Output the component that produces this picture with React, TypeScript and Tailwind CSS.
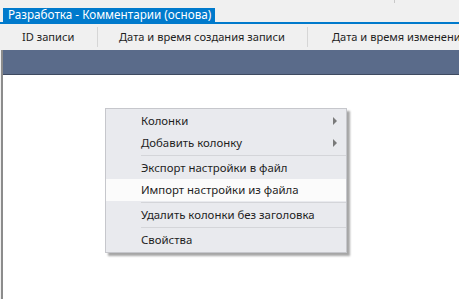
export default function App() {
  return (
    <div className="relative flex h-[299px] w-[459px] flex-col overflow-hidden bg-[#f0f0f0] font-['Noto_Sans',sans-serif] text-[11.4px] text-[#1e1e1e]">
      {/* top strip */}
      <div className="relative h-[8px] shrink-0">
        <div className="absolute left-[394px] top-0 h-[3px] w-px bg-[#c8c8c8]" />
      </div>

      {/* document tab */}
      <div className="flex h-[16px] shrink-0 border-b-2 border-[#007acc]">
        <div className="ml-[3px] flex shrink-0 items-center whitespace-nowrap bg-[#007acc] pl-[5px] pr-[4px] text-[11.7px] leading-none text-white">
          Разработка - Комментарии (основа)
        </div>
      </div>

      {/* column headers */}
      <div className="flex h-[26px] shrink-0 items-center overflow-hidden whitespace-nowrap text-[11.1px]">
        <div className="flex w-[97px] shrink-0 items-center pl-[22px]">ID записи</div>
        <div className="h-[20px] w-px shrink-0 bg-[#d6d6d6]" />
        <div className="flex w-[209px] shrink-0 items-center pl-[21px]">Дата и время создания записи</div>
        <div className="h-[20px] w-px shrink-0 bg-[#d6d6d6]" />
        <div className="flex shrink-0 items-center pl-[24px]">Дата и время изменения записи</div>
      </div>

      {/* grid body */}
      <div className="ml-px flex flex-1 flex-col border-l-2 border-[#8c8c8c] bg-white">
        <div className="h-[25px] shrink-0 border-b border-[#3e4a60] bg-[#5a6b8a]" />
      </div>

      {/* context menu */}
      <div className="absolute left-[105px] top-[108px] w-[242px] border border-[#c6c7cc] bg-[#e9eaee] py-[1px] shadow-[3px_3px_2px_rgba(0,0,0,0.35)]">
        <MenuItem label="Колонки" arrow />
        <MenuItem label="Добавить колонку" arrow />
        <Sep />
        <MenuItem label="Экспорт настройки в файл" />
        <MenuItem label="Импорт настройки из файла" active />
        <Sep />
        <MenuItem label="Удалить колонки без заголовка" />
        <Sep />
        <MenuItem label="Свойства" />
      </div>
    </div>
  )
}

function MenuItem({ label, arrow, active }: { label: string; arrow?: boolean; active?: boolean }) {
  return (
    <div className={`relative flex h-[22px] items-center pl-[35px] ${active ? 'bg-[#fbfbfb]' : ''}`}>
      <span>{label}</span>
      {arrow && (
        <svg className="absolute right-[9px] top-[7px]" width="4" height="8" viewBox="0 0 4 8">
          <path d="M0 0 L4 4 L0 8 Z" fill="#7a7a7a" />
        </svg>
      )}
    </div>
  )
}

function Sep() {
  return (
    <div className="flex h-[3px] items-center pl-[35px]">
      <div className="h-px w-full bg-[#d4d5d9]" />
    </div>
  )
}
